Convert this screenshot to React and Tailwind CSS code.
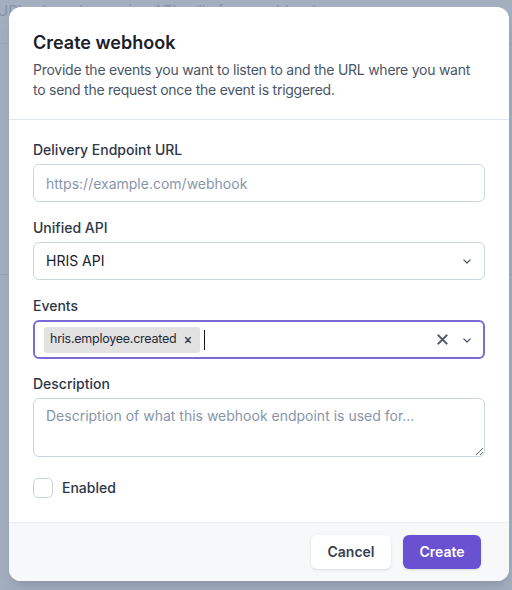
import React, { useState } from "react";

const Chevron = ({ className = "" }) => (
  <svg viewBox="0 0 20 20" className={className} fill="none" stroke="currentColor" strokeWidth="1.5" strokeLinecap="round" strokeLinejoin="round">
    <path d="M6 8.5l4 4 4-4" />
  </svg>
);

export default function App() {
  const [enabled, setEnabled] = useState(false);

  return (
    <div
      className="relative w-[512px] h-[590px] overflow-hidden bg-[#a3aebf]"
      style={{ fontFamily: "Inter, 'Noto Sans', sans-serif" }}
    >
      {/* page behind the overlay */}
      <div className="absolute inset-0 text-[#8893a5]">
        <div className="pt-[1px] text-[15px] leading-5 -ml-[3px] whitespace-nowrap">
          URL where to receive API calls from webhook
        </div>
        <div className="mt-[22px] h-px bg-[#9aa6b8]" />
        <div className="mt-[230px] h-px bg-[#97a3b5]" />
      </div>

      {/* modal */}
      <div className="absolute left-[9px] top-[7px] w-[500px] h-[574px] bg-white rounded-[12px] shadow-lg flex flex-col overflow-hidden">
        <div className="px-6 pt-[22px] pb-[19px] border-b border-[#e2e8f0]">
          <h2 className="text-[18px] leading-7 font-semibold text-[#1a202c]">Create webhook</h2>
          <p className="mt-[3px] text-sm leading-5 tracking-[-0.25px] text-[#4a5568]">
            Provide the events you want to listen to and the URL where you want to send the request once the event is triggered.
          </p>
        </div>

        <div className="px-6 pt-5 flex flex-col gap-4 flex-1">
          <div>
            <label className="block text-sm leading-5 font-medium text-[#2d3748] mb-1">Delivery Endpoint URL</label>
            <input
              className="w-full h-[38px] px-3 rounded-md border border-[#cbd5e0] text-sm text-[#1a202c] placeholder:text-[#8896ab] outline-none"
              placeholder="https://example.com/webhook"
            />
          </div>

          <div>
            <label className="block text-sm leading-5 font-medium text-[#2d3748] mb-1">Unified API</label>
            <div className="w-full h-[38px] pl-3 pr-[9px] rounded-md border border-[#cbd5e0] flex items-center justify-between text-sm text-[#1a202c]">
              <span>HRIS API</span>
              <Chevron className="w-4 h-4 text-[#4a5568]" />
            </div>
          </div>

          <div className="-mb-px">
            <label className="block text-sm leading-5 font-medium text-[#2d3748] mb-1">Events</label>
            <div className="w-full h-[39px] pl-[9px] pr-[8px] rounded-md border-2 border-[#7b6ad6] flex items-center">
              <div className="flex items-center h-[26px] bg-[#e2e2e2] rounded-[3px] pl-[6px] pr-[8px] gap-[8px]">
                <span className="text-[12.5px] tracking-[-0.25px] text-[#1f2937]">hris.employee.created</span>
                <svg viewBox="0 0 10 10" className="w-[8px] h-[8px] text-[#374151]" stroke="currentColor" strokeWidth="1.8" strokeLinecap="round">
                  <path d="M2 2l6 6M8 2l-6 6" />
                </svg>
              </div>
              <div className="ml-[4px] w-px h-[20px] bg-[#111]" />
              <div className="flex-1" />
              <svg viewBox="0 0 12 12" className="w-[11px] h-[11px] text-[#4b5563]" stroke="currentColor" strokeWidth="2.2" strokeLinecap="round">
                <path d="M1.5 1.5l9 9M10.5 1.5l-9 9" />
              </svg>
              <Chevron className="ml-[11px] w-4 h-4 text-[#4a5568]" />
            </div>
          </div>

          <div>
            <label className="block text-sm leading-5 font-medium text-[#2d3748] mb-1">Description</label>
            <textarea
              className="block w-full h-[59px] px-3 py-[7px] rounded-md border border-[#cbd5e0] text-sm text-[#1a202c] placeholder:text-[#8896ab] outline-none"
              placeholder="Description of what this webhook endpoint is used for..."
            />
          </div>

          <label className="mt-[3px] flex items-center gap-[9px] cursor-pointer">
            <input
              type="checkbox"
              checked={enabled}
              onChange={(e) => setEnabled(e.target.checked)}
              className="appearance-none w-[20px] h-[20px] rounded-[5px] border border-[#cbd5e0] bg-white checked:bg-[#6852d1]"
            />
            <span className="text-sm leading-6 font-medium text-[#2d3748]">Enabled</span>
          </label>
        </div>

        <div className="h-[59px] bg-[#f7f8fa] border-t border-[#edf0f4] flex items-center justify-end gap-3 pr-[28px]">
          <button className="h-[34px] w-[80px] rounded-md bg-white shadow-sm text-sm font-semibold text-[#374151]">
            Cancel
          </button>
          <button className="h-[34px] w-[78px] rounded-md bg-[#6852d1] shadow-sm text-sm font-semibold text-white">
            Create
          </button>
        </div>
      </div>
    </div>
  );
}
